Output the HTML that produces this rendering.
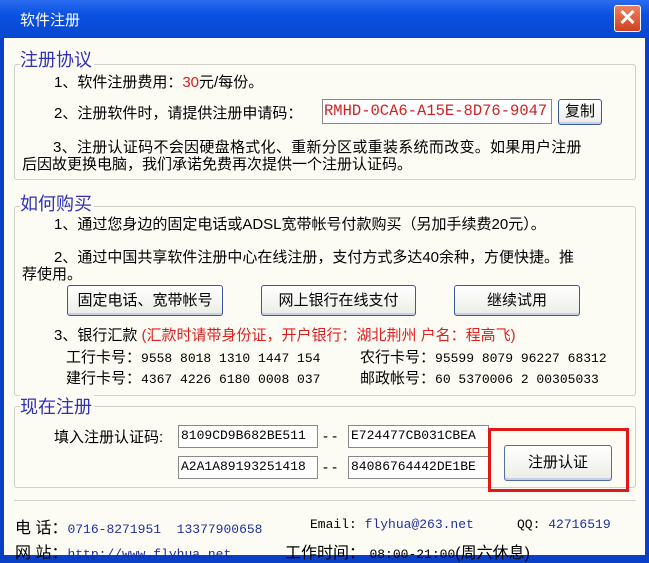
<!DOCTYPE html><html><head><meta charset="utf-8"><style>
*{margin:0;padding:0;box-sizing:border-box}
body{width:649px;height:559px;overflow:hidden;background:#0a3fc8;font-family:"Liberation Sans","Noto Sans CJK SC","WenQuanYi Zen Hei",sans-serif;font-size:15px;color:#000;position:relative}
.a{position:absolute;white-space:nowrap}
#title{left:0;top:0;width:649px;height:38px;background:linear-gradient(#2a6cf0,#0a50e0 40%,#0848d0);}
#cl{left:614px;top:5px;width:27px;height:27px;background:linear-gradient(#f08060,#d04020);border:1px solid #fff;border-radius:3px;color:#fff;font-size:22px;line-height:24px;text-align:center;font-weight:bold}
#body{left:4px;top:38px;width:641px;height:517px;background:#fcfcf4}
.g{position:absolute;border:1px solid #d0d0c8;border-radius:3px}
.gt{color:#3030b8;font-size:18px;background:#fcfcf4;padding-right:2px}
.btn{position:absolute;border:1px solid #3c5a9a;border-radius:3px;background:linear-gradient(#fff,#ececE6);text-align:center;font-size:15px;box-shadow:inset 0 -2px 0 #c8d0e8}
.in{position:absolute;border:1px solid #888;background:#fff;font-family:"Liberation Mono",monospace;font-size:13px;line-height:20px;padding-left:2px}
.mono{font-family:"Liberation Mono",monospace;font-size:13px}
.bl{color:#2030a0}
</style></head><body>
<div class="a" id="title"></div>
<div class="a" style="left:20px;top:9px;color:#fff;font-size:15px">软件注册</div>
<div class="a" id="cl">✕</div>
<div class="a" id="body"></div>

<div class="g" style="left:14px;top:64px;width:622px;height:116px"></div>
<div class="a gt" style="left:20px;top:46px">注册协议</div>
<div class="a" style="left:54px;top:71px">1、软件注册费用：<span style="color:#d02020">30</span>元/每份。</div>
<div class="a" style="left:54px;top:102px">2、注册软件时，请提供注册申请码：</div>
<div class="in" style="left:322px;top:99px;width:230px;height:25px;color:#d02020;font-size:15.5px;line-height:23px;padding-left:1px">RMHD-0CA6-A15E-8D76-9047</div>
<div class="btn" style="left:558px;top:99px;width:44px;height:26px;line-height:23px;font-size:15px">复制</div>
<div class="a" style="left:53px;top:136px;letter-spacing:0.3px">3、注册认证码不会因硬盘格式化、重新分区或重装系统而改变。如果用户注册</div>
<div class="a" style="left:22px;top:153px">后因故更换电脑，我们承诺免费再次提供一个注册认证码。</div>

<div class="g" style="left:14px;top:206px;width:622px;height:190px"></div>
<div class="a gt" style="left:20px;top:190px">如何购买</div>
<div class="a" style="left:54px;top:213px">1、通过您身边的固定电话或ADSL宽带帐号付款购买（另加手续费20元）。</div>
<div class="a" style="left:54px;top:246px">2、通过中国共享软件注册中心在线注册，支付方式多达40余种，方便快捷。推</div>
<div class="a" style="left:22px;top:263px">荐使用。</div>
<div class="btn" style="left:67px;top:285px;width:156px;height:31px;line-height:29px">固定电话、宽带帐号</div>
<div class="btn" style="left:261px;top:285px;width:155px;height:31px;line-height:29px">网上银行在线支付</div>
<div class="btn" style="left:454px;top:285px;width:126px;height:31px;line-height:29px">继续试用</div>
<div class="a" style="left:54px;top:324px">3、银行汇款 <span style="color:#e02020">(汇款时请带身份证，开户银行：湖北荆州 户名：程高飞)</span></div>
<div class="a" style="left:66px;top:346px">工行卡号：<span class="mono">9558 8018 1310 1447 154</span></div>
<div class="a" style="left:360px;top:346px">农行卡号：<span class="mono">95599 8079 96227 68312</span></div>
<div class="a" style="left:66px;top:367px">建行卡号：<span class="mono">4367 4226 6180 0008 037</span></div>
<div class="a" style="left:360px;top:367px">邮政帐号：<span class="mono">60 5370006 2 00305033</span></div>

<div class="g" style="left:14px;top:406px;width:622px;height:82px"></div>
<div class="a gt" style="left:20px;top:393px">现在注册</div>
<div class="a" style="left:54px;top:426px">填入注册认证码:</div>
<div class="in" style="left:178px;top:425px;width:140px;height:23px">8109CD9B682BE511</div>
<div class="a" style="left:323px;top:428px">- -</div>
<div class="in" style="left:348px;top:425px;width:141px;height:23px">E724477CB031CBEA</div>
<div class="in" style="left:178px;top:456px;width:140px;height:23px">A2A1A89193251418</div>
<div class="a" style="left:323px;top:459px">- -</div>
<div class="in" style="left:348px;top:456px;width:141px;height:23px">84086764442DE1BE</div>
<div class="a" style="left:488px;top:428px;width:141px;height:64px;border:3px solid #e01818"></div>
<div class="btn" style="left:504px;top:445px;width:108px;height:36px;line-height:34px;border-color:#5070a0">注册认证</div>

<div class="a" style="left:14px;top:500px;width:622px;border-top:1px solid #d0d0c8"></div>
<div class="a" style="left:15px;top:514px;font-size:16px">电 话：<span class="mono bl">0716-8271951&nbsp;&nbsp;13377900658</span></div>
<div class="a mono" style="left:310px;top:517px">Email: <span class="bl">flyhua@263.net</span></div>
<div class="a mono" style="left:517px;top:517px">QQ: <span class="bl">42716519</span></div>
<div class="a" style="left:15px;top:539px;font-size:16px">网 站：<span class="mono bl">http://www.flyhua.net</span></div>
<div class="a" style="left:285px;top:539px;font-size:16px">工作时间： <span class="mono">08:00-21:00</span>(周六休息)</div>
</body></html>
